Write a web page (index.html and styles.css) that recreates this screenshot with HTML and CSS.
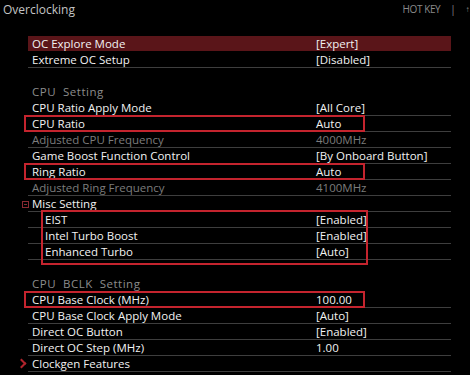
FILE: index.html
```html
<!DOCTYPE html>
<html>
<head>
<meta charset="utf-8">
<link rel="stylesheet" href="styles.css">
</head>
<body>
<div class="top">
  <span class="title">Overclocking</span>
  <span class="hotkey"><span>HOT KEY</span><span class="sep">|</span><span class="arrow">&#x2191;</span></span>
</div>
<div class="list">
  <div class="row active"><span>OC Explore Mode</span><span>[Expert]</span></div>
  <div class="row"><span>Extreme OC Setup</span><span>[Disabled]</span></div>
  <div class="row blank"></div>
  <div class="row head"><span>CPU&nbsp; Setting</span></div>
  <div class="row"><span>CPU Ratio Apply Mode</span><span>[All Core]</span></div>
  <div class="row boxed"><span>CPU Ratio</span><span>Auto</span></div>
  <div class="row dim"><span>Adjusted CPU Frequency</span><span>4000MHz</span></div>
  <div class="row"><span>Game Boost Function Control</span><span>[By Onboard Button]</span></div>
  <div class="row boxed"><span>Ring Ratio</span><span>Auto</span></div>
  <div class="row dim"><span>Adjusted Ring Frequency</span><span>4100MHz</span></div>
  <div class="row misc"><span>Misc Setting</span></div>
  <div class="group">
    <div class="row sub"><span>EIST</span><span>[Enabled]</span></div>
    <div class="row sub"><span>Intel Turbo Boost</span><span>[Enabled]</span></div>
    <div class="row sub"><span>Enhanced Turbo</span><span>[Auto]</span></div>
  </div>
  <div class="row blank"></div>
  <div class="row head"><span>CPU&nbsp; BCLK&nbsp; Setting</span></div>
  <div class="row boxed"><span>CPU Base Clock (MHz)</span><span>100.00</span></div>
  <div class="row"><span>CPU Base Clock Apply Mode</span><span>[Auto]</span></div>
  <div class="row"><span>Direct OC Button</span><span>[Enabled]</span></div>
  <div class="row"><span>Direct OC Step (MHz)</span><span>1.00</span></div>
  <div class="row more"><span>Clockgen Features</span></div>
</div>
</body>
</html>
```
FILE: styles.css
```css
html, body {
  margin: 0;
  padding: 0;
  background: #000;
  overflow: hidden;
}
body {
  width: 470px;
  height: 375px;
  font-family: "Open Sans", "Noto Sans", sans-serif;
  color: #f2f2f2;
}
.top {
  height: 36px;
  display: flex;
  justify-content: space-between;
  align-items: flex-start;
}
.title {
  font-size: 12px;
  color: #c4c4c4;
  line-height: 20px;
  padding-left: 3px;
}
.hotkey {
  display: flex;
  align-items: center;
  gap: 10px;
  font-size: 10px;
  color: #8a8a8a;
  line-height: 18px;
  letter-spacing: -0.4px;
  white-space: nowrap;
  margin-right: 1px;
}
.hotkey .arrow {
  font-size: 8px;
}
.list {
  margin-left: 28px;
  width: 423px;
}
.row {
  position: relative;
  box-sizing: border-box;
  height: 16px;
  line-height: 16px;
  font-size: 11.5px;
  font-weight: 500;
  display: grid;
  grid-template-columns: 284px 1fr;
  padding-left: 4px;
  border-bottom: 1px solid #3e3e3e;
  white-space: nowrap;
}
.row.active {
  background: #5a1519;
  border-bottom-color: #000;
}
.row.blank, .row.head {
  border-bottom-color: transparent;
}
.row.head {
  color: #8c8c8c;
  letter-spacing: 0.5px;
}
.row.dim {
  color: #7c7c7c;
}
.row.sub {
  padding-left: 17px;
  grid-template-columns: 271px 1fr;
}
.row.boxed::after {
  content: "";
  position: absolute;
  left: -4px;
  top: -1px;
  width: 341px;
  height: 17px;
  box-sizing: border-box;
  border: 2px solid #c4242e;
  pointer-events: none;
}
.group {
  position: relative;
}
.group::after {
  content: "";
  position: absolute;
  left: 13px;
  top: -2px;
  width: 327px;
  height: 55px;
  box-sizing: border-box;
  border: 2px solid #c4242e;
}
.row.misc::before {
  content: "";
  position: absolute;
  left: -6px;
  top: 5px;
  width: 7px;
  height: 7px;
  box-sizing: border-box;
  border: 1px solid #8a2a32;
  background: linear-gradient(#8a2a32, #8a2a32) center / 3px 1px no-repeat;
}
.row.more::before {
  content: "";
  position: absolute;
  left: -10px;
  top: 4px;
  width: 5px;
  height: 5px;
  border-right: 2px solid #b0232c;
  border-bottom: 2px solid #b0232c;
  transform: rotate(-45deg);
}
```
